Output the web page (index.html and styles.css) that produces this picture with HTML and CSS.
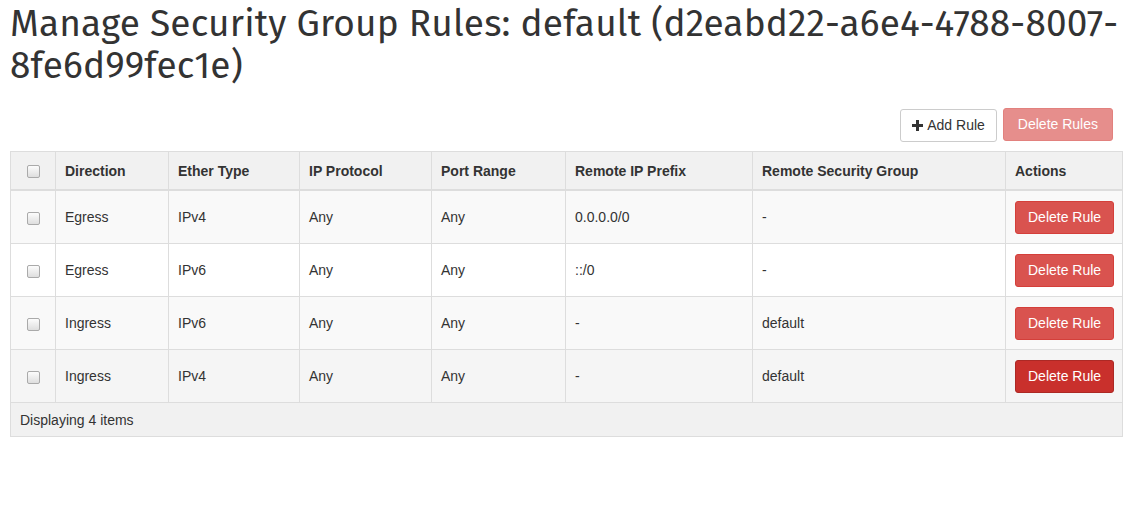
FILE: index.html
```html
<!DOCTYPE html>
<html>
<head>
<meta charset="utf-8">
<link rel="stylesheet" href="styles.css">
</head>
<body>
<h1 class="title">Manage Security Group Rules: default (d2eabd22-a6e4-4788-8007-8fe6d99fec1e)</h1>
<div class="actions-bar">
  <button class="btn btn-default"><svg class="plus" width="11" height="11" viewBox="0 0 11 11"><path d="M4 0h3v4h4v3H7v4H4V7H0V4h4z" fill="#333"/></svg> Add Rule</button>
  <button class="btn btn-danger disabled">Delete Rules</button>
</div>
<table class="rules">
  <thead>
    <tr>
      <th class="c-check"><span class="cb"></span></th>
      <th class="c-dir">Direction</th>
      <th class="c-eth">Ether Type</th>
      <th class="c-proto">IP Protocol</th>
      <th class="c-port">Port Range</th>
      <th class="c-prefix">Remote IP Prefix</th>
      <th class="c-group">Remote Security Group</th>
      <th class="c-act">Actions</th>
    </tr>
  </thead>
  <tbody>
    <tr class="odd">
      <td class="c-check"><span class="cb"></span></td>
      <td>Egress</td><td>IPv4</td><td>Any</td><td>Any</td><td>0.0.0.0/0</td><td>-</td>
      <td class="c-act"><button class="btn btn-danger">Delete Rule</button></td>
    </tr>
    <tr class="even">
      <td class="c-check"><span class="cb"></span></td>
      <td>Egress</td><td>IPv6</td><td>Any</td><td>Any</td><td>::/0</td><td>-</td>
      <td class="c-act"><button class="btn btn-danger">Delete Rule</button></td>
    </tr>
    <tr class="odd">
      <td class="c-check"><span class="cb"></span></td>
      <td>Ingress</td><td>IPv6</td><td>Any</td><td>Any</td><td>-</td><td>default</td>
      <td class="c-act"><button class="btn btn-danger">Delete Rule</button></td>
    </tr>
    <tr class="hover">
      <td class="c-check"><span class="cb"></span></td>
      <td>Ingress</td><td>IPv4</td><td>Any</td><td>Any</td><td>-</td><td>default</td>
      <td class="c-act"><button class="btn btn-danger active">Delete Rule</button></td>
    </tr>
  </tbody>
  <tfoot>
    <tr><td colspan="8" class="footer">Displaying 4 items</td></tr>
  </tfoot>
</table>
</body>
</html>
```
FILE: styles.css
```css
html, body { margin: 0; padding: 0; background: #fff; }
body {
  padding: 0 11px 0 10px;
  font-family: "Liberation Sans", Arial, sans-serif;
  font-size: 14px;
  color: #333;
}
.title {
  margin: 0;
  padding-top: 3px;
  font-family: "Fira Sans", "Open Sans", "Noto Sans", sans-serif;
  font-weight: 400;
  font-size: 37px;
  line-height: 42px;
  color: #333;
  letter-spacing: 0.15px;
}
.actions-bar {
  display: flex;
  justify-content: flex-end;
  align-items: flex-start;
  gap: 6px;
  padding: 21px 10px 9px 0;
}
.btn {
  font-family: "Liberation Sans", Arial, sans-serif;
  font-size: 14px;
  line-height: 19px;
  padding: 6px 12px;
  border-radius: 3px;
  border: 1px solid transparent;
  cursor: pointer;
  white-space: nowrap;
}
.btn-default {
  background: #fff;
  border-color: #ccc;
  color: #333;
  padding: 6px 11px;
  margin-top: 1px;
}
.plus { vertical-align: -1px; margin-right: 1px; }
.btn-danger {
  background: #d9534f;
  border-color: #d43f3a;
  color: #fff;
}
.btn-danger.disabled { opacity: .65; padding: 6px 14px; }
.btn-danger.active { background: #c9302c; border-color: #ac2925; }
.rules {
  width: 100%;
  table-layout: fixed;
  border-collapse: collapse;
  border: 1px solid #ddd;
}
.rules th, .rules td {
  border: 1px solid #ddd;
  text-align: left;
  padding: 0 9px;
}
.rules th {
  background: #f1f1f1;
  font-weight: bold;
  height: 37px;
  border-bottom: 2px solid #ddd;
}
.rules td { height: 52px; }
.rules tr.odd td { background: #f9f9f9; }
.rules tr.even td { background: #fff; }
.rules tr.hover td { background: #f5f5f5; }
.c-check { width: 45px; text-align: center !important; }
.c-dir { width: 113px; }
.c-eth { width: 131px; }
.c-proto { width: 132px; }
.c-port { width: 134px; }
.c-prefix { width: 187px; }
.c-group { width: 253px; }
.rules th.c-check, .rules th.c-dir, .rules th.c-eth, .rules th.c-proto,
.rules th.c-port, .rules th.c-prefix, .rules th.c-group { box-sizing: border-box; }
.rules td.c-act { padding: 0 9px; }
.cb {
  display: inline-block;
  width: 11px;
  height: 11px;
  border: 1px solid #aaa;
  border-radius: 2px;
  background: linear-gradient(#fcfcfc, #dedede);
  vertical-align: middle;
}
.rules td.footer {
  height: 33px;
  background: #f1f1f1;
  font-size: 14px;
  padding: 0 9px;
}
```
